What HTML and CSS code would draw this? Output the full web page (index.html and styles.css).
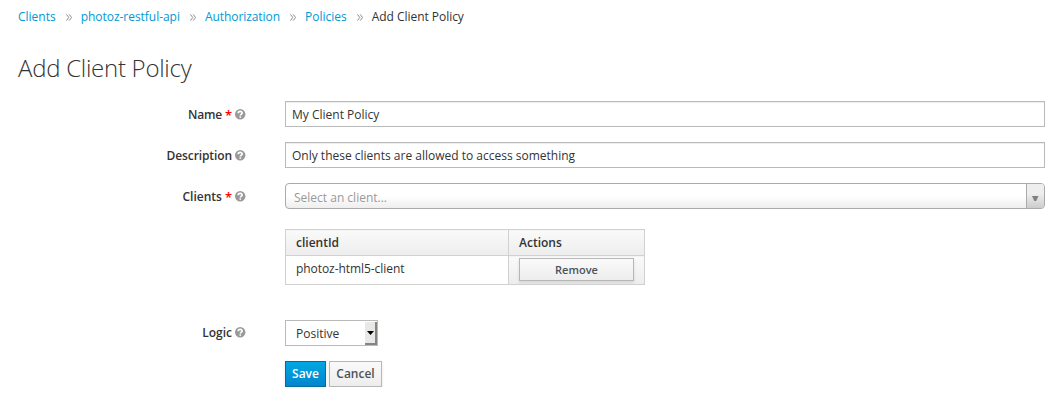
FILE: index.html
```html
<!DOCTYPE html>
<html lang="en">
<head>
<meta charset="utf-8">
<title>Add Client Policy</title>
<link rel="stylesheet" href="styles.css">
</head>
<body>
<svg class="defs" width="0" height="0" aria-hidden="true">
  <symbol id="help" viewBox="0 0 11 11">
    <circle cx="5.2" cy="5.3" r="5.2" fill="#999"/>
    <path d="M3.2 4.2C3.2 1.8 7.2 1.8 7.2 4.1C7.2 5.3 5.3 5.1 5.3 6.5" fill="none" stroke="#fff" stroke-width="1.6"/>
    <path d="M4.5 7.3h1.6v1.5h-1.6z" fill="#fff"/>
  </symbol>
  <symbol id="sep" viewBox="0 0 6 7">
    <path d="M.4 .4L2.8 3.5L.4 6.6M3.2 .4L5.6 3.5L3.2 6.6" fill="none" stroke="#8c8c8c" stroke-width="1"/>
  </symbol>
</svg>
<main class="page">
  <nav class="breadcrumb">
    <a class="crumb">Clients</a><svg class="sep"><use href="#sep"/></svg>
    <a class="crumb api">photoz-restful-api</a><svg class="sep"><use href="#sep"/></svg>
    <a class="crumb authorization">Authorization</a><svg class="sep"><use href="#sep"/></svg>
    <a class="crumb">Policies</a><svg class="sep"><use href="#sep"/></svg>
    <span class="crumb current">Add Client Policy</span>
  </nav>
  <h1 class="title">Add Client Policy</h1>
  <form class="form">
    <div class="row">
      <div class="label"><span class="l-name">Name</span><span class="required">*</span><svg class="help"><use href="#help"/></svg></div>
      <div class="input"><span>My Client Policy</span></div>
    </div>
    <div class="row">
      <div class="label"><span class="l-desc">Description</span><svg class="help"><use href="#help"/></svg></div>
      <div class="input"><span>Only these clients are allowed to access something</span></div>
    </div>
    <div class="row clients">
      <div class="label"><span>Clients</span><span class="required">*</span><svg class="help"><use href="#help"/></svg></div>
      <div class="combo">
        <span class="placeholder">Select an client...</span>
        <span class="combo-arrow"><svg width="7" height="5" viewBox="0 0 7 5"><path d="M0 0h6.5L4.2 5H2.3z" fill="#808080"/></svg></span>
      </div>
    </div>
    <table class="table">
      <thead><tr><th class="col-id">clientId</th><th>Actions</th></tr></thead>
      <tbody><tr><td><span class="client">photoz-html5-client</span></td><td class="action"><div class="remove"><span>Remove</span></div></td></tr></tbody>
    </table>
    <div class="row logic">
      <div class="label"><span>Logic</span><svg class="help"><use href="#help"/></svg></div>
      <div class="select"><span class="value">Positive</span><span class="select-arrow"><svg width="7" height="4" viewBox="0 0 7 4"><path d="M0 0h7L3.5 4z" fill="#000"/></svg></span></div>
    </div>
    <div class="buttons">
      <div class="btn primary"><span>Save</span></div>
      <div class="btn"><span>Cancel</span></div>
    </div>
  </form>
</main>
</body>
</html>
```
FILE: styles.css
```css
* { box-sizing: border-box; }
body {
  margin: 0;
  background: #fff;
  color: #333;
  font: 12px/20px "Open Sans", "Noto Sans", sans-serif;
}
.defs { position: absolute; }
.page { padding: 7px 17px 0 18px; }
.page span, .crumb { white-space: nowrap; }
.breadcrumb { display: flex; align-items: center; height: 20px; }
.crumb { color: #0099d3; }
.crumb.current { color: #333; letter-spacing: -.04px; }
.crumb.api { letter-spacing: -.04px; }
.crumb.authorization { letter-spacing: -.06px; }
.sep { width: 6px; height: 7px; margin: 1px 9px 0 10px; }
.title {
  margin: 24px 0 0;
  height: 34px;
  font-size: 24px;
  line-height: 34px;
  font-weight: 300;
  letter-spacing: -.27px;
}
.form { padding-top: 16px; }
.row { display: grid; grid-template-columns: 228px 1fr; column-gap: 39px; height: 26px; margin-bottom: 15px; }
.label { display: flex; align-items: center; justify-content: flex-end; font-weight: 600; height: 26px; padding-top: 2px; }
.logic .label { padding-top: 0; }
.l-name { letter-spacing: -.2px; }
.l-desc { letter-spacing: -.1px; }
.required { color: #f00; margin-left: 3px; font-size: 13px; }
.help { width: 11px; height: 11px; margin: 0 0 1px 3px; }
.input {
  display: flex;
  align-items: center;
  padding: 2px 6px 0;
  border: 1px solid #bababa;
  box-shadow: inset 0 1px 1px rgba(0,0,0,.075);
}
.combo {
  display: flex;
  justify-content: space-between;
  border: 1px solid #aaa;
  border-radius: 4px;
  background: linear-gradient(to top, #eee 0%, #fff 50%);
  overflow: hidden;
}
.placeholder { padding: 4px 0 0 8px; color: #999; }
.combo-arrow {
  display: flex;
  align-items: center;
  justify-content: center;
  width: 18px;
  padding-top: 5px;
  border-left: 1px solid #aaa;
  background: linear-gradient(to top, #ccc 0%, #eee 60%);
}
.clients { margin-bottom: 20px; }
.table { width: 360px; margin: 0 0 35px 267px; border-collapse: collapse; table-layout: fixed; }
.table th, .table td { border: 1px solid #d1d1d1; padding: 0 10px; text-align: left; }
.table th { height: 26px; font-weight: 600; background: linear-gradient(#fafafa, #ededed); }
.table td { height: 29px; padding-bottom: 3px; }
.client { letter-spacing: -.06px; }
.table .col-id { width: 223px; }
.table .action { padding: 2px 10px 3px; background: linear-gradient(#fafafa, #ededed); }
.remove, .btn {
  display: flex;
  align-items: center;
  justify-content: center;
  border: 1px solid #b7b7b7;
  background: linear-gradient(#fafafa, #ededed);
  box-shadow: 0 2px 3px rgba(0,0,0,.1);
  color: #4d5258;
  font-weight: 600;
}
.remove { height: 23px; font-size: 11px; }
.select {
  display: flex;
  justify-content: space-between;
  width: 93px;
  border: 1px solid #bababa;
  background: #fff;
}
.value { padding: 3px 0 0 10px; }
.select-arrow {
  display: flex;
  align-items: center;
  justify-content: center;
  width: 12px;
  margin-top: 1px;
  border: solid #858585;
  border-width: 0 2px 2px 0;
  background: #e8e8e7;
}
.buttons { display: flex; gap: 3px; padding-left: 267px; }
.btn { width: 53px; height: 26px; }
.btn.primary {
  width: 41px;
  color: #fff;
  border-color: #006e9c;
  background: linear-gradient(#00a8e1, #0085cf);
}
```
